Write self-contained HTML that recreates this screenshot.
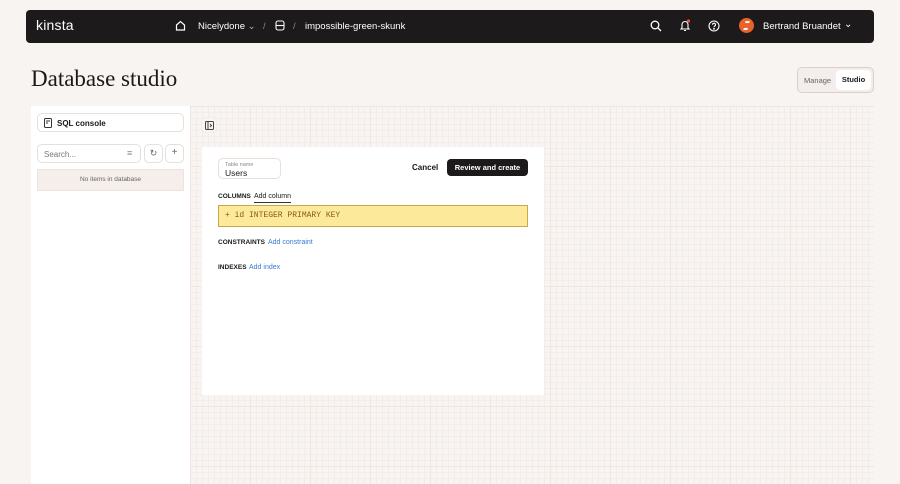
<!DOCTYPE html>
<html><head><style>
*{box-sizing:border-box;margin:0;padding:0}
body{width:900px;height:484px;background:#f8f4f1;font-family:"Liberation Sans",sans-serif;position:relative;overflow:hidden;color:#1a1818}
.hdr{position:absolute;left:26px;top:10px;width:848px;height:33px;background:#1c1a1a;border-radius:4px;color:#fff;font-size:9.5px}
.a{position:absolute}
.panel{position:absolute;left:31px;top:106px;width:159px;height:378px;background:#fff}
.canvas{position:absolute;left:190px;top:106px;width:684px;height:378px;
background-color:#f8f4f1;
background-image:linear-gradient(#efe6e1 1px,transparent 1px),linear-gradient(90deg,#efe6e1 1px,transparent 1px),linear-gradient(#f3ece8 1px,transparent 1px),linear-gradient(90deg,#f3ece8 1px,transparent 1px);
background-size:60px 60px,60px 60px,6px 6px,6px 6px}
.card{position:absolute;left:202px;top:147px;width:342px;height:248px;background:#fff}
.box{position:absolute;border:1px solid #e6e0dc;border-radius:5px;background:#fff}
.lbl{position:absolute;font-size:6.5px;font-weight:bold;line-height:9px}
.lnk{position:absolute;font-size:7px;line-height:9px;color:#3a7bd5}
</style></head><body>
<div class="hdr">
 <div class="a" style="left:10px;top:7px;font-size:14px;letter-spacing:.2px">kinsta</div>
 <svg class="a" style="left:149px;top:10px" width="11" height="11" viewBox="0 0 11 11" fill="none" stroke="#fff" stroke-width="1.2"><path d="M1.5 5 5.5 1.5 9.5 5V10H1.5Z"/></svg>
 <div class="a" style="left:172px;top:11px">Nicelydone <span style="color:#aaa">⌄</span></div>
 <div class="a" style="left:237px;top:11px;color:#888">/</div>
 <svg class="a" style="left:249px;top:10px" width="10" height="11" viewBox="0 0 10 11" fill="none" stroke="#fff" stroke-width="1.1"><rect x="1" y="1" width="8" height="9" rx="2"/><path d="M1 5.5h8"/></svg>
 <div class="a" style="left:267px;top:11px;color:#888">/</div>
 <div class="a" style="left:279px;top:11px">impossible-green-skunk</div>
 <svg class="a" style="left:624px;top:10px" width="12" height="12" viewBox="0 0 12 12" fill="none" stroke="#fff" stroke-width="1.3"><circle cx="5" cy="5" r="3.8"/><path d="M8 8l3 3"/></svg>
 <svg class="a" style="left:653px;top:9px" width="12" height="13" viewBox="0 0 12 13" fill="none" stroke="#fff" stroke-width="1.1"><path d="M3 9V5.5a3 3 0 0 1 6 0V9l1 1H2zM5 11.5h2"/><circle cx="9.5" cy="2" r="1.6" fill="#e53" stroke="none"/></svg>
 <svg class="a" style="left:682px;top:10px" width="12" height="12" viewBox="0 0 12 12" fill="none" stroke="#fff" stroke-width="1.1"><circle cx="6" cy="6" r="5"/><path d="M4.5 4.7a1.5 1.5 0 1 1 2 1.4c-.5.2-.5.6-.5 1.1"/><circle cx="6" cy="8.8" r=".4" fill="#fff"/></svg>
 <div class="a" style="left:713px;top:8px;width:15px;height:15px;border-radius:50%;background:#e8632b"><div style="position:absolute;left:4px;top:3px;width:7px;height:9px;border:2px solid #fff;border-radius:3px;transform:skewX(-15deg);border-left-color:transparent;border-right-color:transparent"></div></div>
 <div class="a" style="left:737px;top:11px">Bertrand Bruandet</div>
 <div class="a" style="left:818px;top:9px;font-size:10px">⌄</div>
</div>
<div class="a" style="left:31px;top:66px;font-family:'Liberation Serif',serif;font-size:23px;color:#1a1818">Database studio</div>
<div class="a" style="left:797px;top:67px;width:77px;height:26px;border:1px solid #d8d0cc;border-radius:5px;background:#f3eeeb">
 <div class="a" style="left:6px;top:8px;font-size:7.5px;color:#666">Manage</div>
 <div class="a" style="left:38px;top:2px;width:35px;height:20px;background:#fff;border-radius:4px;font-size:7.5px;font-weight:bold;text-align:center;line-height:20px">Studio</div>
</div>
<div class="panel">
 <div class="box" style="left:6px;top:7px;width:147px;height:19px">
  <svg class="a" style="left:6px;top:4px" width="9" height="10" viewBox="0 0 9 10" fill="none" stroke="#333" stroke-width="1"><rect x=".5" y=".5" width="7" height="9" rx="1"/><path d="M2 3h4M2 5h2"/></svg>
  <div class="a" style="left:19px;top:5px;font-size:8px;font-weight:bold">SQL console</div>
 </div>
 <div class="box" style="left:6px;top:38px;width:104px;height:19px"><div class="a" style="left:6px;top:5px;font-size:8px;color:#777">Search...</div><div class="a" style="left:89px;top:3px;font-size:9px;color:#888">≡</div></div>
 <div class="box" style="left:113px;top:38px;width:19px;height:19px;font-size:9px;color:#666;text-align:center;line-height:17px">↻</div>
 <div class="box" style="left:134px;top:38px;width:19px;height:19px;font-size:10px;color:#666;text-align:center;line-height:16px">+</div>
 <div class="a" style="left:6px;top:63px;width:147px;height:22px;background:#f5eeea;border:1px solid #ece3de;font-size:6.5px;color:#666;text-align:center;line-height:20px">No items in database</div>
</div>
<div class="canvas"></div>
<div class="box" style="left:201px;top:117px;width:16px;height:16px;background:#f8f4f1;border-color:#eee"><svg class="a" style="left:3px;top:3px" width="9" height="9" viewBox="0 0 9 9" fill="none" stroke="#444" stroke-width="1"><rect x=".5" y=".5" width="8" height="8" rx="1"/><path d="M3 .5v8M5 3l1.5 1.5L5 6"/></svg></div>
<div class="card">
 <div class="box" style="left:16px;top:11px;width:63px;height:21px"><div class="a" style="left:6px;top:3px;font-size:5.5px;color:#888">Table name</div><div class="a" style="left:6px;top:9px;font-size:8.5px">Users</div></div>
 <div class="a" style="left:210px;top:16px;font-size:8px;font-weight:bold">Cancel</div>
 <div class="a" style="left:245px;top:12px;width:81px;height:17px;background:#1c1a1a;border-radius:4px;color:#fff;font-size:7.5px;font-weight:bold;text-align:center;line-height:17px">Review and create</div>
 <div class="lbl" style="left:16px;top:45px">COLUMNS</div>
 <div class="a" style="left:52px;top:45px;font-size:7px;line-height:9px;border-bottom:1px solid #333;padding-bottom:1px">Add column</div>
 <div class="a" style="left:16px;top:58px;width:310px;height:22px;background:#fde99a;border:1px solid #c9aa4a;font-family:'Liberation Mono',monospace;font-size:8px;color:#8a5a10;line-height:20px;padding-left:6px">+ id INTEGER PRIMARY KEY</div>
 <div class="lbl" style="left:16px;top:91px">CONSTRAINTS</div>
 <div class="lnk" style="left:66px;top:91px">Add constraint</div>
 <div class="lbl" style="left:16px;top:116px">INDEXES</div>
 <div class="lnk" style="left:47px;top:116px">Add index</div>
</div>
</body></html>
